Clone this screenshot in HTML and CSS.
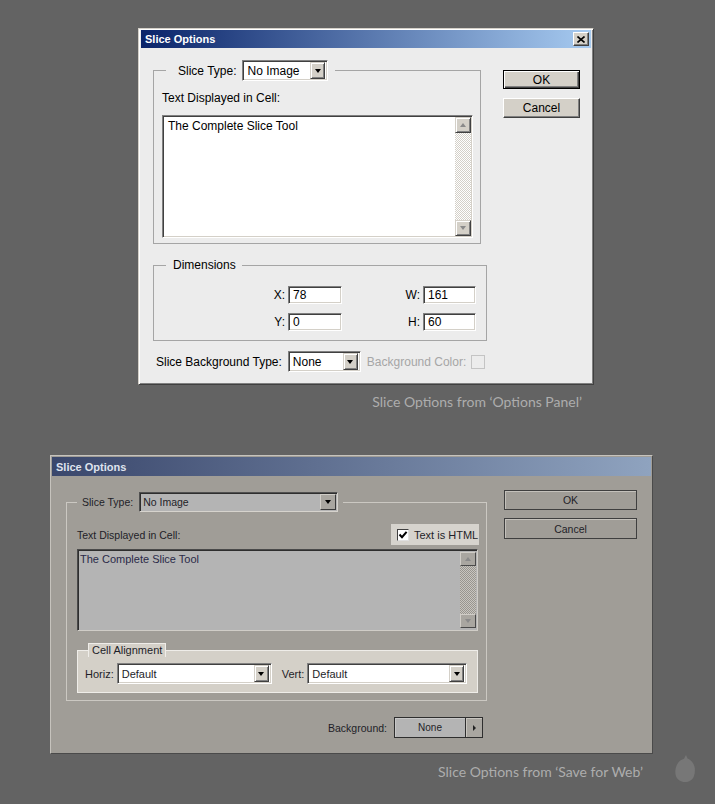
FILE: index.html
```html
<!DOCTYPE html>
<html>
<head>
<meta charset="utf-8">
<link rel="stylesheet" href="styles.css">
</head>
<body>
<div class="win-a">
  <div class="tbar-a">
    <span class="ttl">Slice Options</span>
    <span class="xbtn"><svg width="8" height="7" viewBox="0 0 8 7"><path d="M0.5 0.5 L7.5 6.5 M7.5 0.5 L0.5 6.5" stroke="#000" stroke-width="1.6"/></svg></span>
  </div>
  <div class="body-a">
    <div class="left-a">
      <fieldset class="g1">
        <legend class="lg1"><span class="lgin"><span>Slice Type:</span><span class="sel-a st"><span class="sv">No Image</span><span class="dd"><i class="tri"></i></span></span></span></legend>
        <div class="lbl-a">Text Displayed in Cell:</div>
        <div class="ta-a">
          <div class="ta-txt">The Complete Slice Tool</div>
          <div class="sb-a"><span class="sbb"><i class="up"></i></span><span class="trk"></span><span class="sbb"><i class="dn"></i></span></div>
        </div>
      </fieldset>
      <fieldset class="g2">
        <legend class="lg2">Dimensions</legend>
        <div class="dims">
          <span class="dl">X:</span><span class="inp">78</span>
          <span class="dl">W:</span><span class="inp">161</span>
          <span class="dl">Y:</span><span class="inp">0</span>
          <span class="dl">H:</span><span class="inp">60</span>
        </div>
      </fieldset>
      <div class="bgrow-a">
        <span>Slice Background Type:</span>
        <span class="sel-a sb2"><span class="sv">None</span><span class="dd"><i class="tri"></i></span></span>
        <span class="dis">Background Color:</span>
        <span class="swatch"></span>
      </div>
    </div>
    <div class="right-a">
      <div class="btn-a def">OK</div>
      <div class="btn-a">Cancel</div>
    </div>
  </div>
</div>
<div class="cap-a">Slice Options from ‘Options Panel’</div>

<div class="win-b">
  <div class="tbar-b"><span class="ttl-b">Slice Options</span></div>
  <div class="body-b">
    <div class="left-b">
      <fieldset class="gb">
        <legend class="lgb"><span class="lgin-b"><span>Slice Type:</span><span class="sel-b"><span class="sv">No Image</span><span class="dd-b"><i class="tri"></i></span></span></span></legend>
        <div class="row-b">
          <span>Text Displayed in Cell:</span>
          <span class="chk-panel"><span class="chk"><svg width="10" height="10" viewBox="0 0 10 10"><path d="M1.5 4.5 L4 7.2 L8.6 1.8" fill="none" stroke="#000" stroke-width="2"/></svg></span><span>Text is HTML</span></span>
        </div>
        <div class="ta-b">
          <div class="ta-txt-b">The Complete Slice Tool</div>
          <div class="sb-b"><span class="sbb-b"><i class="up"></i></span><span class="trk-b"></span><span class="sbb-b"><i class="dn"></i></span></div>
        </div>
        <fieldset class="gc">
          <legend class="lgc">Cell Alignment</legend>
          <div class="cell-row">
            <span>Horiz:</span>
            <span class="sel-w w1"><span class="sv">Default</span><span class="dd-w"><i class="tri"></i></span></span>
            <span class="vlbl">Vert:</span>
            <span class="sel-w w2"><span class="sv">Default</span><span class="dd-w"><i class="tri"></i></span></span>
          </div>
        </fieldset>
      </fieldset>
      <div class="bgrow-b">
        <span>Background:</span>
        <span class="bgbtn"><span class="bgmain">None</span><span class="bgarr"><i class="rtri"></i></span></span>
      </div>
    </div>
    <div class="right-b">
      <div class="btn-b">OK</div>
      <div class="btn-b">Cancel</div>
    </div>
  </div>
</div>
<div class="cap-b">
  <span class="cap-b-txt">Slice Options from ‘Save for Web’</span>
  <svg class="drop" width="20" height="27" viewBox="0 0 20 27"><path d="M11 0 L12.5 3.5 C15 4.5 18 7 19.3 11 C20.3 14 20 18 19 21 C17.5 25 14 27 10 27 C5.5 27 2 24.5 0.8 20.5 C-0.3 16.5 0.5 11.5 3 8 C4.5 6 6.5 4.5 9 3.8 Z" fill="#777"/></svg>
</div>
</body>
</html>
```

FILE: styles.css
```css
* { box-sizing: border-box; }
html, body { margin: 0; padding: 0; }
body {
  background: #636363;
  width: 715px;
  height: 804px;
  overflow: hidden;
  padding-top: 28px;
  font-family: "Liberation Sans", Arial, sans-serif;
  font-size: 12px;
  color: #000;
}

/* ---------- top dialog ---------- */
.win-a {
  margin-left: 138px;
  width: 456px;
  height: 357px;
  background: #ececec;
  border: 1px solid;
  border-color: #d4d0c8 #404040 #404040 #d4d0c8;
  box-shadow: inset 1px 1px #fff, inset -1px -1px #808080;
  padding: 1px 2px;
  display: flex;
  flex-direction: column;
}
.tbar-a {
  height: 18px;
  background: linear-gradient(to right, #0a246a, #a6caf0);
  display: flex;
  align-items: center;
  justify-content: space-between;
  padding: 0 2px 0 4px;
}
.ttl { color: #fff; font-weight: bold; font-size: 11px; }
.xbtn {
  width: 16px; height: 14px;
  background: #d4d0c8;
  border: 1px solid;
  border-color: #fff #404040 #404040 #fff;
  box-shadow: inset -1px -1px #808080;
  display: flex; align-items: center; justify-content: center;
}
.xbtn svg { display: block; }
.body-a { display: flex; gap: 16px; padding-left: 12px; flex: 1; }
.left-a { width: 334px; padding-top: 12px; display: flex; flex-direction: column; align-items: flex-start; }
.right-a { padding-top: 22px; display: flex; flex-direction: column; gap: 9px; }

.g1 {
  width: 328px; margin: 0; min-width: 0;
  border: 1px solid #a5a5a5;
  padding: 0 7px 5px 8px;
}
.lg1 { margin-left: 4px; padding: 0 7px 0 12px; }
.lgin { display: flex; align-items: center; gap: 6px; height: 21px; }
.sel-a {
  height: 21px; background: #fff;
  border: 1px solid; border-color: #808080 #fff #fff #808080;
  box-shadow: inset 1px 1px #404040, inset -1px -1px #d4d0c8;
  display: flex; align-items: center; justify-content: space-between;
  padding: 2px 2px 2px 4px;
  flex: none;
}
.sel-a.st { width: 86px; }
.sel-a.sb2 { width: 73px; }
.sv { white-space: nowrap; }
.dd {
  width: 15px; height: 17px; background: #d4d0c8;
  border: 1px solid; border-color: #d4d0c8 #404040 #404040 #d4d0c8;
  box-shadow: inset 1px 1px #fff, inset -1px -1px #808080;
  display: flex; align-items: center; justify-content: center;
}
.tri { display: block; width: 0; height: 0; border-left: 3.5px solid transparent; border-right: 3.5px solid transparent; border-top: 4px solid #000; }
.lbl-a { margin-top: 10px; line-height: 14px; }
.ta-a {
  margin-top: 10px; width: 311px; height: 123px; background: #fff;
  border: 1px solid; border-color: #808080 #fff #fff #808080;
  box-shadow: inset 1px 1px #404040, inset -1px -1px #d4d0c8;
  padding: 1px;
  display: flex;
}
.ta-txt { flex: 1; padding: 2px 4px; line-height: 14px; }
.sb-a { width: 16px; display: flex; flex-direction: column; }
.sbb {
  width: 16px; height: 16px; background: #d4d0c8;
  border: 1px solid; border-color: #d4d0c8 #404040 #404040 #d4d0c8;
  box-shadow: inset 1px 1px #fff, inset -1px -1px #808080;
  display: flex; align-items: center; justify-content: center;
}
.trk {
  flex: 1;
  background-color: #ececec;
  background-image: repeating-conic-gradient(#fff 0 25%, #d4d0c8 0 50%);
  background-size: 2px 2px;
}
.up { display: block; width: 0; height: 0; border-left: 3.5px solid transparent; border-right: 3.5px solid transparent; border-bottom: 4px solid #8a8a8a; }
.dn { display: block; width: 0; height: 0; border-left: 3.5px solid transparent; border-right: 3.5px solid transparent; border-top: 4px solid #8a8a8a; }

.g2 {
  width: 334px; margin: 13px 0 0 0; min-width: 0;
  border: 1px solid #a5a5a5;
  padding: 0 10px 9px 8px;
}
.lg2 { margin-left: 4px; padding: 0 6px 0 7px; line-height: 16px; }
.dims {
  margin-top: 13px;
  display: grid;
  grid-template-columns: 123px 54px 75px 53px;
  grid-auto-rows: 18px;
  column-gap: 3px; row-gap: 9px;
}
.dl { text-align: right; line-height: 18px; }
.inp {
  background: #fff; line-height: 14px;
  border: 1px solid; border-color: #808080 #fff #fff #808080;
  box-shadow: inset 1px 1px #404040, inset -1px -1px #d4d0c8;
  padding: 1px 3px 0 4px;
}
.bgrow-a { margin: 10px 0 0 3px; display: flex; align-items: center; height: 21px; }
.bgrow-a .sel-a { margin-left: 6px; }
.dis { color: #a6a6a6; margin-left: 6px; }
.swatch { width: 14px; height: 14px; border: 1px solid #c4c4c4; margin-left: 5px; }

.btn-a {
  width: 77px; height: 19px; background: #d4d0c8;
  border: 1px solid; border-color: #fff #404040 #404040 #fff;
  box-shadow: inset -1px -1px #808080;
  display: flex; align-items: center; justify-content: center;
}
.btn-a + .btn-a { height: 20px; }
.btn-a.def { border-color: #000; box-shadow: inset 1px 1px #fff, inset -1px -1px #404040, inset -2px -2px #808080; }

.cap-a {
  width: 594px; padding-right: 12px; margin-top: 8px;
  text-align: right;
  font-family: Lato, "Open Sans", sans-serif; font-size: 14px; line-height: 17px;
  color: #adadad;
}

/* ---------- bottom dialog ---------- */
.win-b {
  margin: 45px 0 0 50px;
  width: 603px; height: 299px;
  background: #a09d97;
  border: 1px solid; border-color: #c6c3bd #4a4a4a #4a4a4a #c6c3bd;
  padding: 1px;
  display: flex; flex-direction: column;
  font-size: 10.5px;
  color: #1e1e28;
}
.tbar-b {
  height: 19px;
  background: linear-gradient(to right, #3a476c, #8fa3bf);
  display: flex; align-items: center; padding-left: 4px;
}
.ttl-b { color: #dfe3ee; font-weight: bold; font-size: 11px; }
.body-b { display: flex; gap: 17px; padding-left: 14px; flex: 1; }
.left-b { width: 421px; padding-top: 16px; }
.right-b { padding-top: 14px; display: flex; flex-direction: column; gap: 8px; }
.gb {
  width: 421px; margin: 0; min-width: 0;
  border: 1px solid #cbc8c2;
  padding: 0 8px 7px 10px;
}
.lgb { padding: 0 5px; }
.lgin-b { display: flex; align-items: center; gap: 6px; height: 20px; }
.sel-b {
  width: 199px; height: 20px; background: #b4b4b4;
  border: 1px solid; border-color: #505050 #d6d3cd #d6d3cd #505050;
  box-shadow: inset 1px 1px #2e2e2e;
  display: flex; align-items: center; justify-content: space-between;
  padding: 1px 1px 1px 3px;
}
.dd-b {
  width: 16px; height: 16px; background: #a9a6a0;
  border: 1px solid; border-color: #d0cdc7 #3a3a3a #3a3a3a #d0cdc7;
  display: flex; align-items: center; justify-content: center;
}
.row-b { margin-top: 12px; height: 21px; display: flex; align-items: center; justify-content: space-between; }
.chk-panel {
  width: 88px; height: 21px; margin-right: -1px;
  background: #d6d3cd;
  display: flex; align-items: center; gap: 5px; padding-left: 6px;
  font-size: 11px;
}
.chk {
  width: 12px; height: 12px; background: #fff;
  border: 1px solid; border-color: #404040 #e0e0e0 #e0e0e0 #404040;
  display: flex; align-items: center; justify-content: center;
}
.chk svg { display: block; }
.ta-b {
  margin-top: 4px; width: 401px; height: 82px; background: #b4b4b4;
  border: 1px solid; border-color: #4a4a4a #d0cdc7 #d0cdc7 #4a4a4a;
  box-shadow: inset 1px 1px #2e2e2e;
  padding: 1px;
  display: flex;
  color: #2a2a48;
}
.ta-txt-b { flex: 1; padding: 1px 1px; line-height: 14px; font-size: 11px; }
.sb-b { width: 16px; display: flex; flex-direction: column; padding: 1px 0; }
.sbb-b {
  height: 14px; background: #a9a6a0;
  border: 1px solid; border-color: #d0cdc7 #4a4a4a #4a4a4a #d0cdc7;
  display: flex; align-items: center; justify-content: center;
}
.trk-b {
  flex: 1;
  background-image: repeating-conic-gradient(#c8c5bf 0 25%, #98958f 0 50%);
  background-size: 2px 2px;
}
.gc {
  margin: 12px 0 0 0; min-width: 0;
  background: #d4d0c8;
  border: 1px solid #efede9;
  padding: 0 8px 8px 7px;
}
.lgc {
  margin-left: 3px; padding: 0 3px;
  background: #d4d0c8;
  border: 1px solid #efede9; border-bottom: none;
  line-height: 13px; font-size: 11px;
}
.cell-row { margin-top: 6px; display: flex; align-items: center; font-size: 11px; }
.sel-w {
  height: 21px; background: #fff;
  border: 1px solid; border-color: #808080 #fff #fff #808080;
  box-shadow: inset 1px 1px #404040, inset -1px -1px #d4d0c8;
  display: flex; align-items: center; justify-content: space-between;
  padding: 2px 2px 2px 4px;
}
.sel-w.w1 { width: 155px; margin-left: 3px; }
.sel-w.w2 { width: 160px; margin-left: 3px; }
.vlbl { margin-left: 10px; }
.dd-w {
  width: 15px; height: 17px; background: #d4d0c8;
  border: 1px solid; border-color: #d4d0c8 #404040 #404040 #d4d0c8;
  box-shadow: inset 1px 1px #fff, inset -1px -1px #808080;
  display: flex; align-items: center; justify-content: center;
}
.bgrow-b { margin-top: 16px; display: flex; justify-content: flex-end; align-items: center; gap: 7px; padding-right: 4px; }
.bgbtn { width: 89px; height: 21px; border: 1px solid #2e2e2e; display: flex; }
.bgmain { flex: 1; background: #b4b4b4; display: flex; align-items: center; justify-content: center; font-size: 10px; box-shadow: inset 1px 1px #c8c8c8; }
.bgarr { width: 17px; background: #a9a6a0; border-left: 1px solid #2e2e2e; display: flex; align-items: center; justify-content: center; box-shadow: inset 1px 1px #c8c5bf; }
.rtri { display: block; width: 0; height: 0; border-top: 3px solid transparent; border-bottom: 3px solid transparent; border-left: 3px solid #222; }
.btn-b {
  width: 133px; height: 20px; background: #a09d97;
  border: 1px solid #3f3f3f;
  box-shadow: inset 1px 1px #c4c1bb;
  display: flex; align-items: center; justify-content: center;
}
.btn-b + .btn-b { height: 21px; }

.cap-b { display: flex; justify-content: flex-end; align-items: flex-start; padding-right: 20px; }
.cap-b-txt { margin-top: 9px; font-family: Lato, "Open Sans", sans-serif; font-size: 14px; line-height: 17px; color: #adadad; }
.drop { display: block; margin: 1px 0 0 32px; }
```
